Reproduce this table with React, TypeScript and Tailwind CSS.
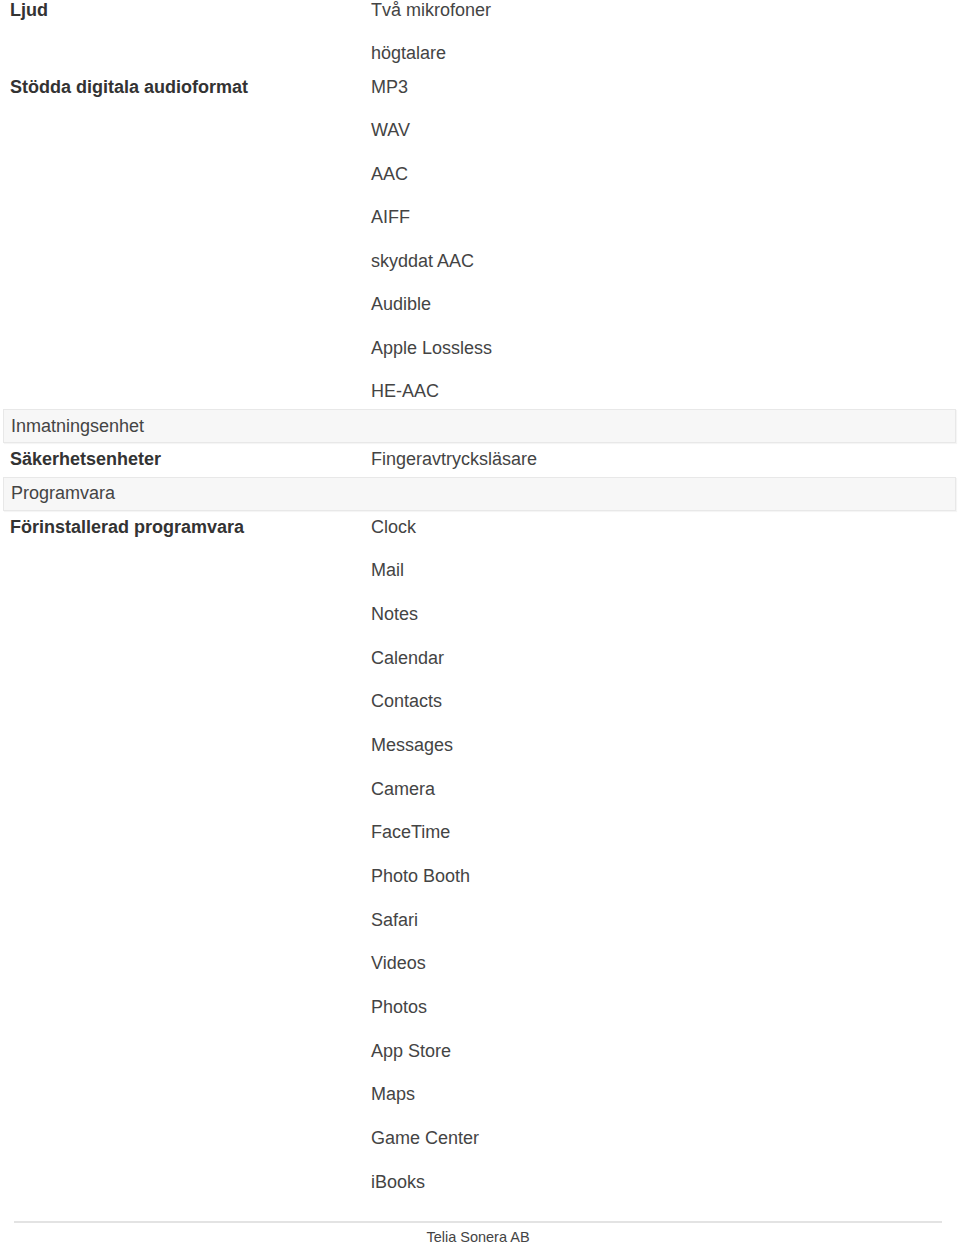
const ljud = ['Två mikrofoner', 'högtalare'];

const audioFormats = ['MP3', 'WAV', 'AAC', 'AIFF', 'skyddat AAC', 'Audible', 'Apple Lossless', 'HE-AAC'];

const apps = [
  'Clock',
  'Mail',
  'Notes',
  'Calendar',
  'Contacts',
  'Messages',
  'Camera',
  'FaceTime',
  'Photo Booth',
  'Safari',
  'Videos',
  'Photos',
  'App Store',
  'Maps',
  'Game Center',
  'iBooks',
];

function SpecRow({ label, values, gap = 'gap-[9.8px]' }: { label: string; values: string[]; gap?: string }) {
  return (
    <div className="grid grid-cols-[371px_1fr] leading-[33.75px]">
      <div className="pl-[10px] font-bold text-[#333333]">{label}</div>
      <div className={`flex flex-col ${gap}`}>
        {values.map((v) => (
          <div key={v}>{v}</div>
        ))}
      </div>
    </div>
  );
}

function SectionRow({ label }: { label: string }) {
  return (
    <div className="ml-[3px] mr-[4px] box-border flex h-[34px] items-center border border-[#e8e8e8] bg-[#f7f7f7] pl-[7px] shadow-[1px_1px_1px_rgba(0,0,0,0.04)]">
      {label}
    </div>
  );
}

export default function App() {
  return (
    <div className="min-h-[1246px] bg-white font-['Liberation_Sans',Arial,sans-serif] text-[18px] text-[#444444]">
      <div className="-mt-[6px]">
        <SpecRow label="Ljud" values={ljud} gap="gap-[9px]" />
        <SpecRow label="Stödda digitala audioformat" values={audioFormats} />
        <SectionRow label="Inmatningsenhet" />
        <SpecRow label="Säkerhetsenheter" values={['Fingeravtrycksläsare']} />
        <SectionRow label="Programvara" />
        <SpecRow label="Förinstallerad programvara" values={apps} gap="gap-[9.92px]" />
      </div>

      {/* Footer */}
      <footer className="mt-[22px] ml-[14px] mr-[18px] border-t-2 border-[#e3e3e3] pt-[4px] text-center text-[14.5px] leading-[20px] text-[#444444]">
        Telia Sonera AB
      </footer>
    </div>
  );
}
